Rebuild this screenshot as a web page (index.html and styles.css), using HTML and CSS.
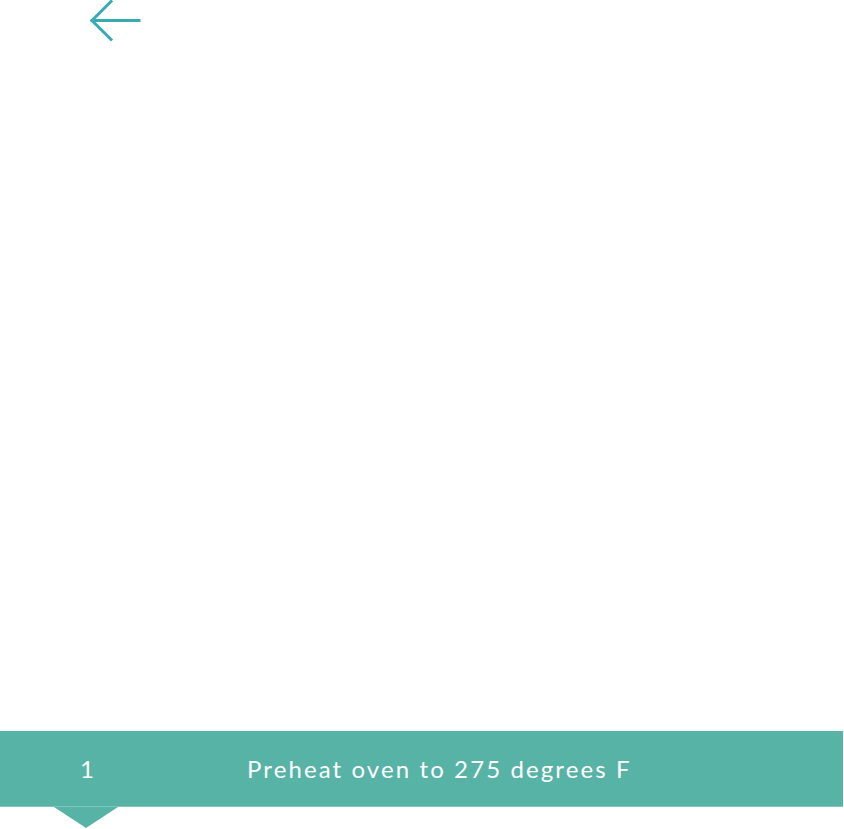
FILE: index.html
```html
<!DOCTYPE html>
<html>
<head>
<meta charset="utf-8">
<link rel="stylesheet" href="styles.css">
</head>
<body>
<div class="page">
  <header class="top">
    <svg class="back" width="52" height="42" viewBox="0 0 52 42">
      <path d="M50 20.5H3M22 1.5L3 20.5L22 39.5" fill="none" stroke="#3aaab1" stroke-width="3" stroke-linecap="square"/>
    </svg>
  </header>
  <main class="spacer"></main>
  <section class="step">
    <div class="num">1</div>
    <div class="text">Preheat oven to 275 degrees F</div>
    <div class="pointer"></div>
  </section>
</div>
</body>
</html>
```
FILE: styles.css
```css
html, body { margin: 0; padding: 0; background: #fff; }
.page { width: 844px; height: 829px; display: flex; flex-direction: column; overflow: hidden; }
.top { height: 42px; padding-left: 89px; display: flex; align-items: flex-start; }
.back { display: block; }
.spacer { flex: 1; }
.step {
  position: relative;
  width: 843px;
  height: 76px;
  margin-bottom: 22px;
  background: #57b3a5;
  border-bottom: 1px solid #7cc5ba;
  box-sizing: border-box;
  display: flex;
  align-items: center;
  font-family: "Lato", "Open Sans", sans-serif;
  color: #fff;
  font-size: 24px;
}
.num { width: 80px; padding-left: 80px; box-sizing: content-box; }
.text { padding-left: 87px; letter-spacing: 2.1px; }
.pointer {
  position: absolute;
  left: 54px;
  top: 76px;
  width: 0; height: 0;
  border-left: 32px solid transparent;
  border-right: 32px solid transparent;
  border-top: 21px solid #57b3a5;
}
```
